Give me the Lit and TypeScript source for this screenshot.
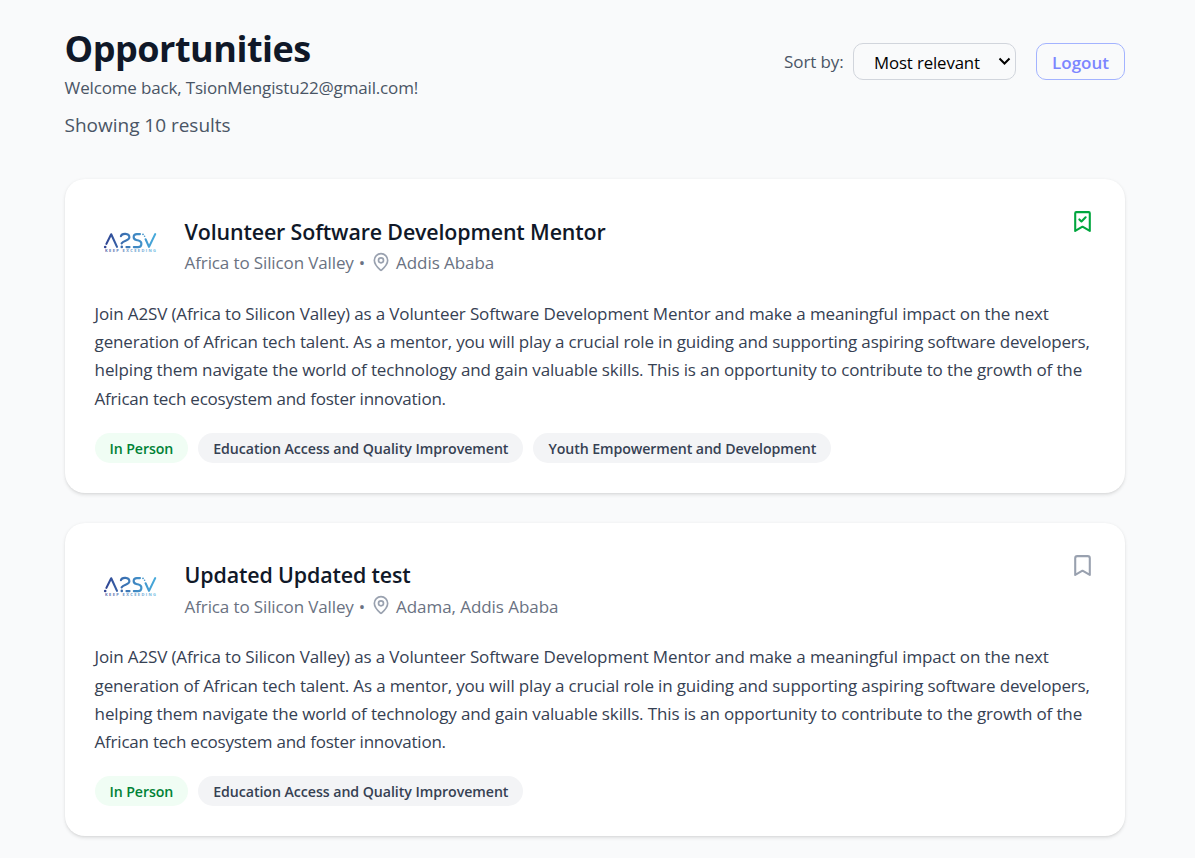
import { LitElement, html, css, svg } from "lit";
import { customElement, property } from "lit/decorators.js";

interface Opportunity {
  title: string;
  org: string;
  location: string;
  saved: boolean;
  lines: string[];
  mode: string;
  categories: string[];
}

const DESCRIPTION = [
  "Join A2SV (Africa to Silicon Valley) as a Volunteer Software Development Mentor and make a meaningful impact on the next",
  "generation of African tech talent. As a mentor, you will play a crucial role in guiding and supporting aspiring software developers,",
  "helping them navigate the world of technology and gain valuable skills. This is an opportunity to contribute to the growth of the",
  "African tech ecosystem and foster innovation.",
];

const OPPORTUNITIES: Opportunity[] = [
  {
    title: "Volunteer Software Development Mentor",
    org: "Africa to Silicon Valley",
    location: "Addis Ababa",
    saved: true,
    lines: DESCRIPTION,
    mode: "In Person",
    categories: ["Education Access and Quality Improvement", "Youth Empowerment and Development"],
  },
  {
    title: "Updated Updated test",
    org: "Africa to Silicon Valley",
    location: "Adama, Addis Ababa",
    saved: false,
    lines: DESCRIPTION,
    mode: "In Person",
    categories: ["Education Access and Quality Improvement"],
  },
];

@customElement("org-logo")
export class OrgLogo extends LitElement {
  static styles = css`
    :host { display: block; width: 70px; height: 70px; flex: none; }
    svg { display: block; }
    .tagline { font: 700 4px "Open Sans", sans-serif; opacity: 0.8; }
  `;
  render() {
    return html`<svg width="70" height="70" viewBox="0 -0.9 70 70" aria-label="A2SV">
      <defs>
        <linearGradient id="g" gradientUnits="userSpaceOnUse" x1="9" y1="0" x2="62" y2="0">
          <stop offset="0" stop-color="#2f4190" />
          <stop offset="0.5" stop-color="#3d7fbc" />
          <stop offset="1" stop-color="#48addd" />
        </linearGradient>
      </defs>
      <g fill="none" stroke="url(#g)" stroke-width="2.1" stroke-linecap="round" stroke-linejoin="round">
        <path d="M11.4 34 L16.2 24.4 L22 37" />
        <path d="M25.9 26.4 C26.8 23 34.4 23 34.4 27.4 C34.4 31 28.6 30.4 26.6 33.4" />
        <path d="M31.4 37.2 H34.6" />
        <path d="M45 24.2 H41.8 C37.8 24.2 37.6 29.4 41.2 30 L43.6 30.6 C47.6 31.6 47.2 37.2 43.2 37.2 H38.8" />
        <path d="M50.6 29.4 L54 37 L60.2 24.2" />
      </g>
      <g fill="url(#g)">
        <circle cx="10.2" cy="37.1" r="1.3" />
        <circle cx="26.8" cy="37" r="1.3" />
        <circle cx="48" cy="24.4" r="0.9" />
        <circle cx="49.6" cy="26.4" r="0.8" />
      </g>
      <text class="tagline" x="10" y="42.6" textLength="51" fill="url(#g)">KEEP EXCEEDING</text>
    </svg>`;
  }
}

@customElement("opportunity-card")
export class OpportunityCard extends LitElement {
  @property({ attribute: false }) item!: Opportunity;

  static styles = css`
    :host {
      display: block; box-sizing: border-box; padding: 30px; height: 313.4px;
      background: #fff; border-radius: 20px;
      box-shadow: 0 1.25px 3.75px rgba(0, 0, 0, 0.1), 0 1.25px 2.5px -1.25px rgba(0, 0, 0, 0.1);
    }
    .head { display: flex; gap: 20px; height: 70px; }
    .heading { flex: 1; min-width: 0; padding-top: 6.8px; }
    h2 { margin: 0; font-size: 21.4px; line-height: 32px; font-weight: 600; color: #101828; white-space: nowrap; letter-spacing: -0.14px; }
    .meta { display: flex; align-items: center; height: 29.4px; font-size: 17px; color: #6a7282; white-space: nowrap; letter-spacing: -0.12px; }
    .dot { margin: 0 5px; }
    .pin { margin: 0 5.4px 2px 0.6px; display: block; color: #99a1af; }
    .place { letter-spacing: -0.06px; }
    .mark { display: block; color: #99a1af; }
    .mark.saved { color: #00a63e; }
    .text { margin: 20.4px 0 19.2px; font-size: 17px; line-height: 28.4375px; color: #364153; white-space: nowrap; letter-spacing: -0.16px; }
    .line { display: block; }
    .line:nth-child(1) { letter-spacing: -0.14px; }
    .line:nth-child(3) { letter-spacing: -0.13px; }
    .line:nth-child(4) { letter-spacing: -0.23px; }
    .tags { display: flex; gap: 10px; }
    .tag {
      height: 30px; line-height: 31px; padding: 0 15px; border-radius: 15px;
      font-size: 14.2px; font-weight: 600; background: #f3f4f6; color: #364153; white-space: nowrap; letter-spacing: -0.1px;
    }
    .tag:nth-child(2) { letter-spacing: -0.06px; }
    .tag.mode { background: #f0fdf4; color: #008236; letter-spacing: -0.12px; }
  `;

  render() {
    const o = this.item;
    return html`
      <div class="head">
        <org-logo></org-logo>
        <div class="heading">
          <h2>${o.title}</h2>
          <div class="meta">
            <span class="org">${o.org}</span><span class="dot">•</span>
            <svg class="pin" width="20" height="20" viewBox="0 0 24 24" fill="none" stroke="currentColor" stroke-width="2" stroke-linecap="round" stroke-linejoin="round">
              <path d="M20 10c0 4.993-5.539 10.193-7.399 11.799a1 1 0 0 1-1.202 0C9.539 20.193 4 14.993 4 10a8 8 0 0 1 16 0" />
              <circle cx="12" cy="10" r="3" />
            </svg>
            <span class="place">${o.location}</span>
          </div>
        </div>
        <svg class="mark ${o.saved ? "saved" : ""}" width="25" height="25" viewBox="0 0 24 24" fill="none" stroke="currentColor" stroke-width="2" stroke-linecap="round" stroke-linejoin="round">
          <path d="${o.saved ? "M5 4a1 1 0 0 1 1-1h12a1 1 0 0 1 1 1v17l-7-4-7 4z" : "m19 21-7-4-7 4V5a2 2 0 0 1 2-2h10a2 2 0 0 1 2 2v16z"}" />
          ${o.saved ? svg`<path d="M9 10l2 2 4-4" />` : ""}
        </svg>
      </div>
      <div class="text">${o.lines.map((l) => html`<span class="line">${l}</span>`)}</div>
      <div class="tags">
        <span class="tag mode">${o.mode}</span>
        ${o.categories.map((c) => html`<span class="tag">${c}</span>`)}
      </div>
    `;
  }
}

@customElement("app-root")
export class AppRoot extends LitElement {
  static styles = css`
    :host {
      display: block; box-sizing: border-box; height: 858px; overflow: hidden;
      padding: 25px 70px 0 64.6px; background: #f9fafb;
      font-family: "Open Sans", "Noto Sans", sans-serif; color: #101828;
    }
    header { display: flex; justify-content: space-between; height: 154.2px; white-space: nowrap; }
    h1 { margin: 0; font-size: 36px; line-height: 47px; font-weight: 700; letter-spacing: -0.5px; }
    .welcome { margin: 0; font-size: 17px; line-height: 32px; color: #4a5565; letter-spacing: -0.16px; }
    .count { margin: 6px 0 0; font-size: 19px; line-height: 30px; color: #4a5565; letter-spacing: -0.02px; }
    .controls { display: flex; align-items: center; height: 37px; margin-top: 18px; }
    .sort { font-size: 17px; color: #4a5565; margin-right: 9.5px; letter-spacing: -0.12px; }
    .select {
      box-sizing: border-box; display: flex; align-items: center; justify-content: space-between;
      width: 163px; height: 37px; padding: 0 4px 0 20px; margin-right: 20px;
      border: 1px solid #d1d5dc; border-radius: 10px; font-size: 16.8px; color: #000; letter-spacing: -0.12px;
    }
    .value { padding-top: 1px; }
    .logout {
      box-sizing: border-box; width: 89px; height: 37px; padding: 1px 0 0; background: none;
      border: 1px solid #a3b3ff; border-radius: 10px; color: #7c86ff;
      font: 600 17px "Open Sans", sans-serif;
    }
    main { display: grid; gap: 30.1px; }
  `;

  render() {
    return html`
      <header>
        <div class="intro">
          <h1><span>Opportunities</span></h1>
          <p class="welcome"><span>Welcome back, TsionMengistu22@gmail.com!</span></p>
          <p class="count"><span>Showing 10 results</span></p>
        </div>
        <div class="controls">
          <span class="sort">Sort by:</span>
          <div class="select" role="combobox" tabindex="0">
            <span class="value">Most relevant</span>
            <svg width="13" height="9" viewBox="0 0 13 9" fill="none" stroke="#000" stroke-width="2"><path d="M1.5 1.5l5 5 5-5" /></svg>
          </div>
          <button class="logout">Logout</button>
        </div>
      </header>
      <main>${OPPORTUNITIES.map((o) => html`<opportunity-card .item=${o}></opportunity-card>`)}</main>
    `;
  }
}
